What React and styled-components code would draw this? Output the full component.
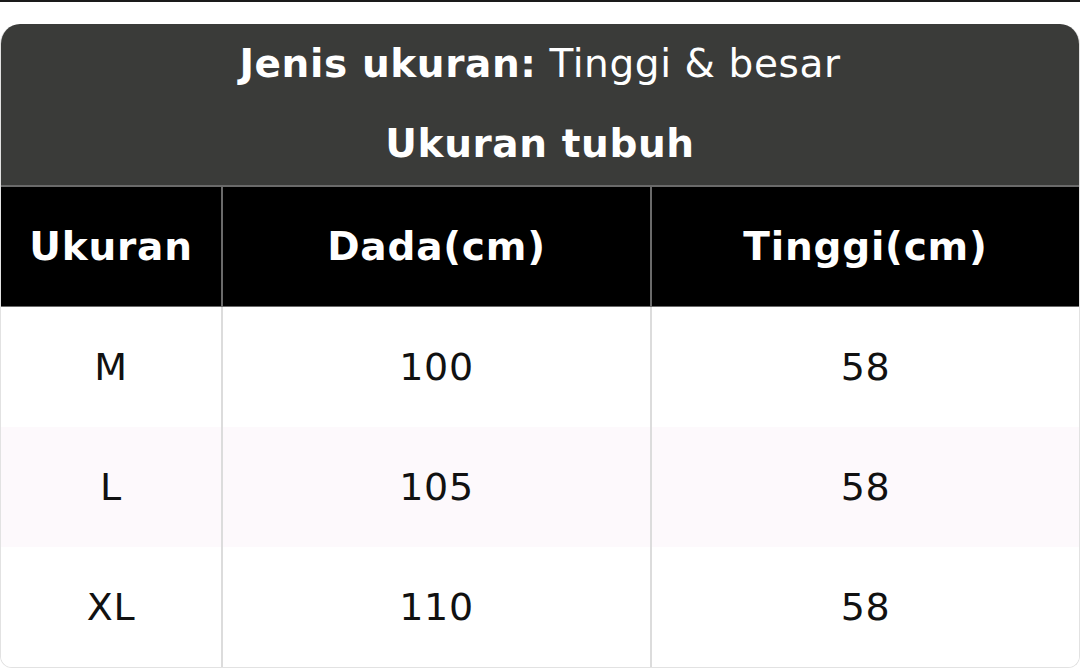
import React from "react";
import styled, { createGlobalStyle } from "styled-components";

const GlobalStyle = createGlobalStyle`
  html, body {
    margin: 0;
    padding: 0;
    background: #ffffff;
    font-family: "DejaVu Sans", "Noto Sans", sans-serif;
  }
`;

const Page = styled.div`
  width: 1080px;
  height: 668px;
  overflow: hidden;
  border-top: 2px solid #1a1a1a;
  box-sizing: border-box;
  padding-top: 22px;
`;

const Card = styled.div`
  width: 1080px;
  border-radius: 20px 20px 12px 12px;
  overflow: hidden;
  border: 1px solid #e2e2e2;
  border-top: none;
  box-sizing: border-box;
  background: #ffffff;
`;

const Header = styled.div`
  background: #3a3b39;
  color: #ffffff;
  padding-bottom: 1px;
  border-bottom: 2px solid #6a6a6a;
  text-align: center;
`;

const HeaderLine = styled.div`
  height: 80px;
  line-height: 80px;
  font-size: 39px;
  font-weight: ${(p) => (p.$bold ? 700 : 400)};
  letter-spacing: 0.6px;

  b {
    font-weight: 700;
  }
`;

const Row = styled.div`
  display: grid;
  grid-template-columns: 220px 1fr 1fr;
  height: ${(p) => (p.$head ? "119px" : "120px")};
  background: ${(p) => (p.$head ? "#000000" : p.$tint ? "#fdf9fc" : "#ffffff")};
  color: ${(p) => (p.$head ? "#ffffff" : "#111111")};
  font-weight: ${(p) => (p.$head ? 700 : 400)};
  border-bottom: ${(p) => (p.$head ? "1px solid #6a6a6a" : "none")};
`;

const Cell = styled.div`
  display: flex;
  align-items: center;
  justify-content: center;
  font-size: ${(p) => (p.$head ? "39px" : "38px")};
  letter-spacing: ${(p) => (p.$head ? "0.8px" : "0.6px")};
  border-left: 2px solid ${(p) => (p.$head ? "#6a6a6a" : "#dcdcdc")};

  &:first-child {
    border-left: none;
  }
`;

const headers = ["Ukuran", "Dada(cm)", "Tinggi(cm)"];
const rows = [
  ["M", "100", "58"],
  ["L", "105", "58"],
  ["XL", "110", "58"],
];

export default function App() {
  return (
    <>
      <GlobalStyle />
      <Page>
        <Card>
          <Header>
            <HeaderLine>
              <b>Jenis ukuran:</b> Tinggi &amp; besar
            </HeaderLine>
            <HeaderLine $bold>Ukuran tubuh</HeaderLine>
          </Header>
          <Row $head>
            {headers.map((h) => (
              <Cell key={h} $head>
                {h}
              </Cell>
            ))}
          </Row>
          {rows.map((r, i) => (
            <Row key={r[0]} $tint={i === 1}>
              {r.map((c, j) => (
                <Cell key={j}>{c}</Cell>
              ))}
            </Row>
          ))}
        </Card>
      </Page>
    </>
  );
}
